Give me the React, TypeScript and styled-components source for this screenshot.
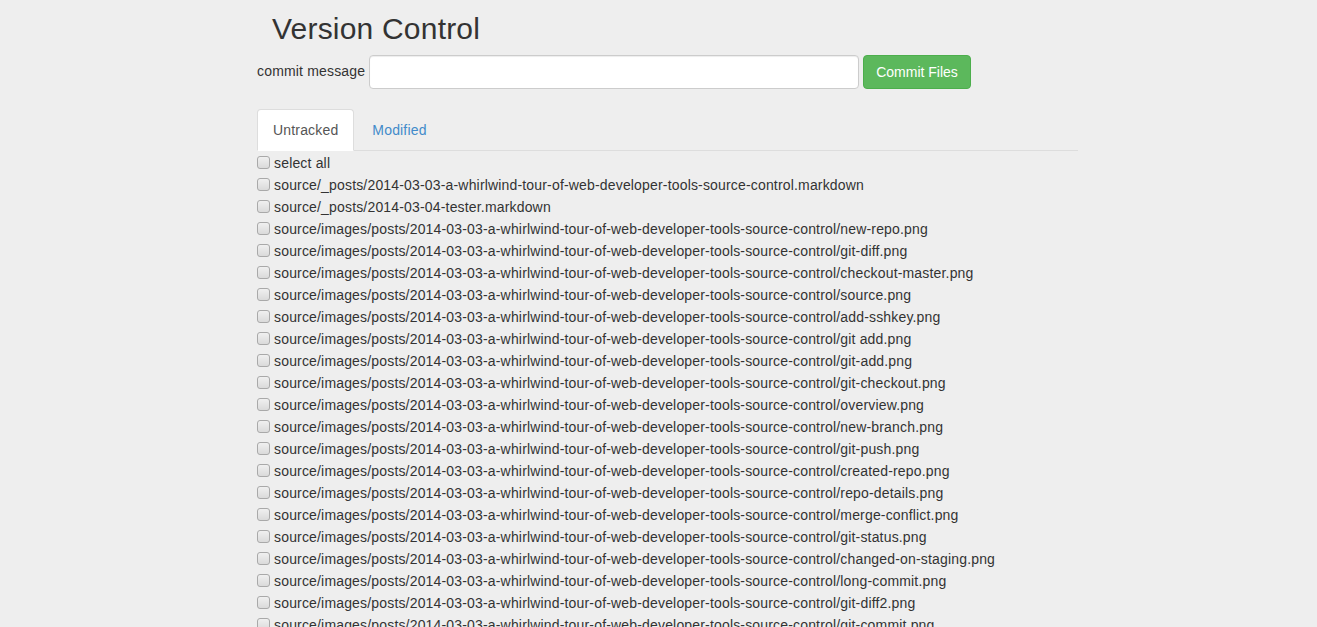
import React, { useState } from 'react';
import styled, { createGlobalStyle } from 'styled-components';

const GlobalStyle = createGlobalStyle`
  html, body {
    margin: 0;
    padding: 0;
    background: #eeeeee;
    font-family: 'Liberation Sans', Arial, Helvetica, sans-serif;
    font-size: 14px;
    line-height: 1.42857;
    letter-spacing: 0.17px;
    color: #333333;
    overflow: hidden;
  }
  * { box-sizing: border-box; }
`;

const Page = styled.main`
  width: 821px;
  margin-left: 257px;
`;

const Title = styled.h2`
  margin: 11px 0 0 15px;
  font-size: 30px;
  font-weight: 500;
  line-height: 36px;
  letter-spacing: 0.2px;
`;

const CommitForm = styled.form`
  display: flex;
  align-items: center;
  margin-top: 8px;
`;

const Label = styled.label`
  margin-right: 4px;
`;

const MessageInput = styled.input`
  width: 490px;
  height: 34px;
  padding: 6px 12px;
  font: inherit;
  color: #555;
  background: #fff;
  border: 1px solid #ccc;
  border-radius: 4px;
  box-shadow: inset 0 1px 1px rgba(0, 0, 0, 0.075);
  outline: none;
`;

const CommitButton = styled.button`
  margin-left: 4px;
  height: 34px;
  padding: 7px 12px 5px;
  font: inherit;
  color: #fff;
  background: #5cb85c;
  border: 1px solid #4cae4c;
  border-radius: 4px;
  cursor: pointer;
`;

const Tabs = styled.ul`
  display: flex;
  list-style: none;
  margin: 20px 0 0;
  padding: 0;
  border-bottom: 1px solid #ddd;
`;

const Tab = styled.li<{ $active?: boolean }>`
  margin-bottom: -1px;
  margin-right: 2px;
  padding: 10px 15px;
  line-height: 20px;
  border: 1px solid ${(p) => (p.$active ? '#ddd' : 'transparent')};
  border-bottom-color: transparent;
  border-radius: 4px 4px 0 0;
  background: ${(p) => (p.$active ? '#fff' : 'transparent')};
  color: ${(p) => (p.$active ? '#555' : '#428bca')};
  cursor: pointer;
`;

const FileList = styled.ul`
  list-style: none;
  margin: 0;
  padding: 2px 0 0;
`;

const FileRow = styled.li`
  display: flex;
  align-items: center;
  height: 22px;
`;

const Check = styled.input`
  appearance: none;
  -webkit-appearance: none;
  width: 13px;
  height: 13px;
  margin: -4px 4px 0 0;
  border: 1px solid #a9a9a9;
  border-radius: 3px;
  background: linear-gradient(#f0f0f0, #dadada);
  flex: none;
`;

const prefix = 'source/images/posts/2014-03-03-a-whirlwind-tour-of-web-developer-tools-source-control/';

const files = [
  'source/_posts/2014-03-03-a-whirlwind-tour-of-web-developer-tools-source-control.markdown',
  'source/_posts/2014-03-04-tester.markdown',
  ...[
    'new-repo.png',
    'git-diff.png',
    'checkout-master.png',
    'source.png',
    'add-sshkey.png',
    'git add.png',
    'git-add.png',
    'git-checkout.png',
    'overview.png',
    'new-branch.png',
    'git-push.png',
    'created-repo.png',
    'repo-details.png',
    'merge-conflict.png',
    'git-status.png',
    'changed-on-staging.png',
    'long-commit.png',
    'git-diff2.png',
    'git-commit.png',
  ].map((f) => prefix + f),
];

export default function App() {
  const [tab, setTab] = useState<'untracked' | 'modified'>('untracked');
  return (
    <>
      <GlobalStyle />
      <Page>
        <Title>Version Control</Title>
        <CommitForm onSubmit={(e) => e.preventDefault()}>
          <Label htmlFor="msg">commit message</Label>
          <MessageInput id="msg" type="text" />
          <CommitButton type="submit">Commit Files</CommitButton>
        </CommitForm>
        <Tabs>
          <Tab $active={tab === 'untracked'} onClick={() => setTab('untracked')}>
            Untracked
          </Tab>
          <Tab $active={tab === 'modified'} onClick={() => setTab('modified')}>
            Modified
          </Tab>
        </Tabs>
        <FileList>
          <FileRow>
            <Check type="checkbox" />
            select all
          </FileRow>
          {files.map((f) => (
            <FileRow key={f}>
              <Check type="checkbox" />
              {f}
            </FileRow>
          ))}
        </FileList>
      </Page>
    </>
  );
}
